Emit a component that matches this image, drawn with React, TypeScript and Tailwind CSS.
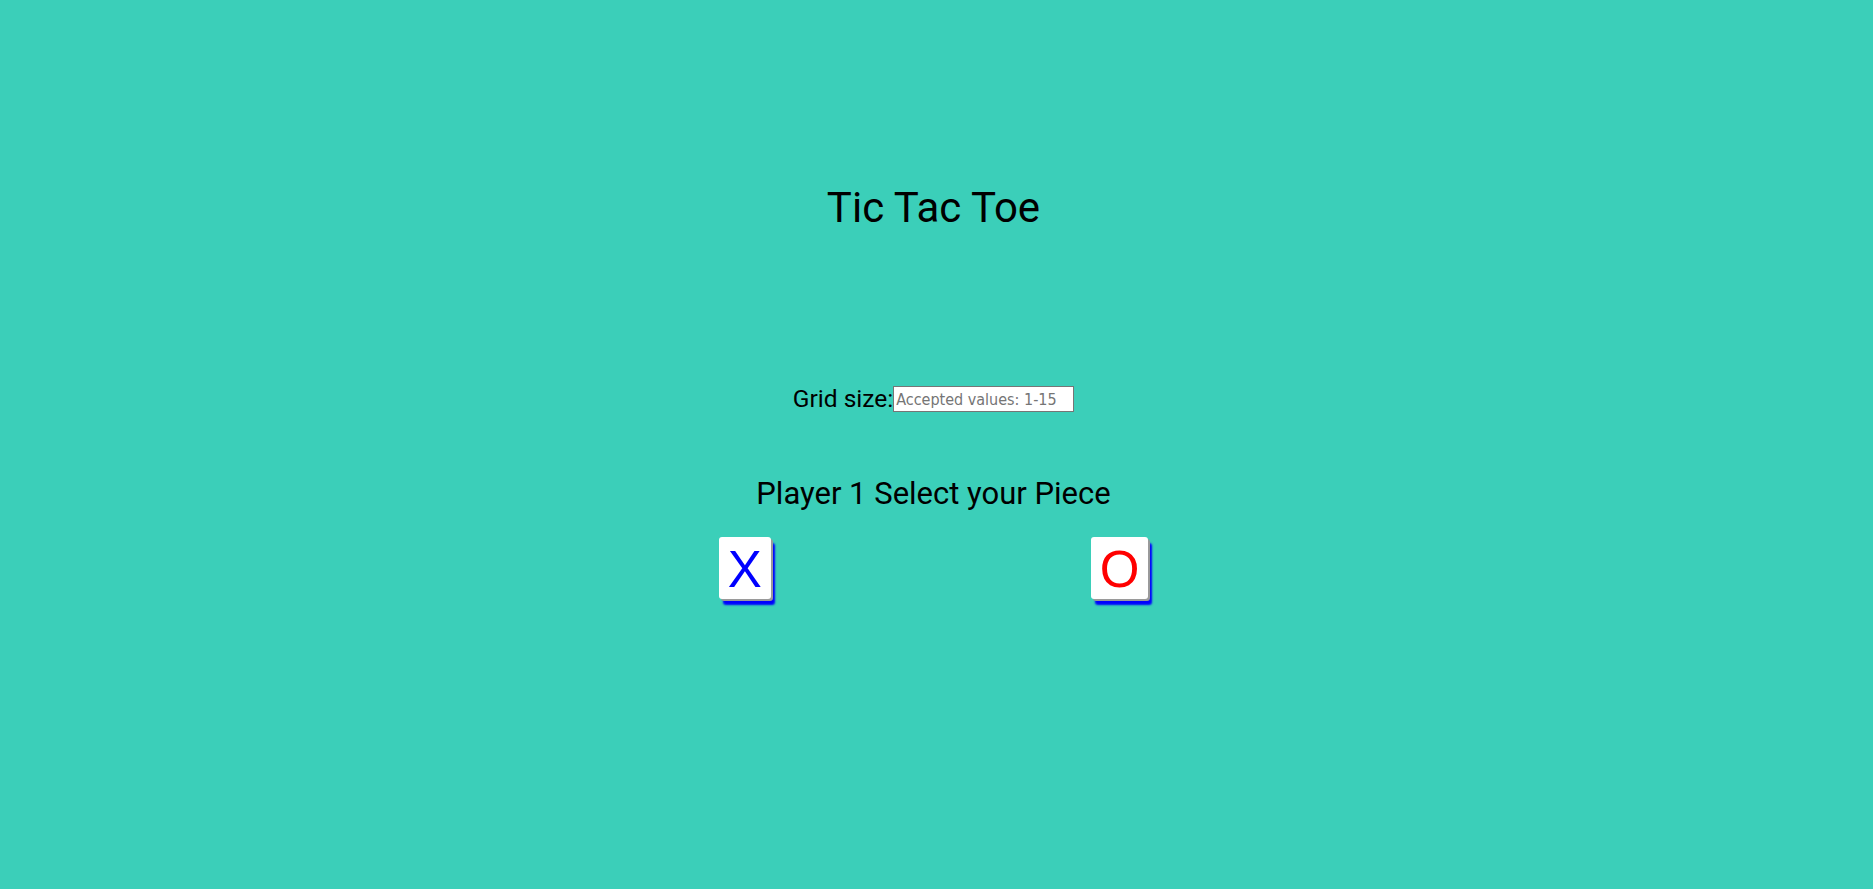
import React from "react";

export default function App() {
  return (
    <div
      className="min-h-screen w-full bg-[#3bcfb9] flex flex-col items-center pr-[6px] text-black"
      style={{ fontFamily: "Roboto, 'Liberation Sans', sans-serif" }}
    >
      <h1 className="mt-[183px] text-[42px] leading-[49px] font-normal">Tic Tac Toe</h1>
      <div className="mt-[153px] flex items-center">
        <label className="text-[24.5px] leading-[28px]">Grid size:</label>
        <input
          type="text"
          placeholder="Accepted values: 1-15"
          className="w-[181px] h-[26px] bg-white border border-[#767676] px-[2px] text-[16px] placeholder:text-[#757575] outline-none"
          style={{ fontFamily: "'DejaVu Sans Condensed', 'DejaVu Sans', sans-serif", fontStretch: "condensed" }}
        />
      </div>
      <h2 className="mt-[63px] text-[31px] leading-[36px] font-normal">Player 1 Select your Piece</h2>
      <div className="mt-[25px] flex justify-center gap-[320px]">
        <button
          className="h-[62px] px-[9px] pt-[4px] bg-white rounded-[3px] text-[51px] leading-[58px] text-[#0000ff] shadow-[2px_2px_0_#9a9a9a,4px_6px_2px_#0000ff]"
          style={{ fontFamily: "'Liberation Sans', Arial, sans-serif" }}
        >
          X
        </button>
        <button
          className="h-[62px] px-[9px] pt-[4px] bg-white rounded-[3px] text-[51px] leading-[58px] text-[#ff0000] shadow-[2px_2px_0_#9a9a9a,4px_6px_2px_#0000ff]"
          style={{ fontFamily: "'Liberation Sans', Arial, sans-serif" }}
        >
          O
        </button>
      </div>
    </div>
  );
}
